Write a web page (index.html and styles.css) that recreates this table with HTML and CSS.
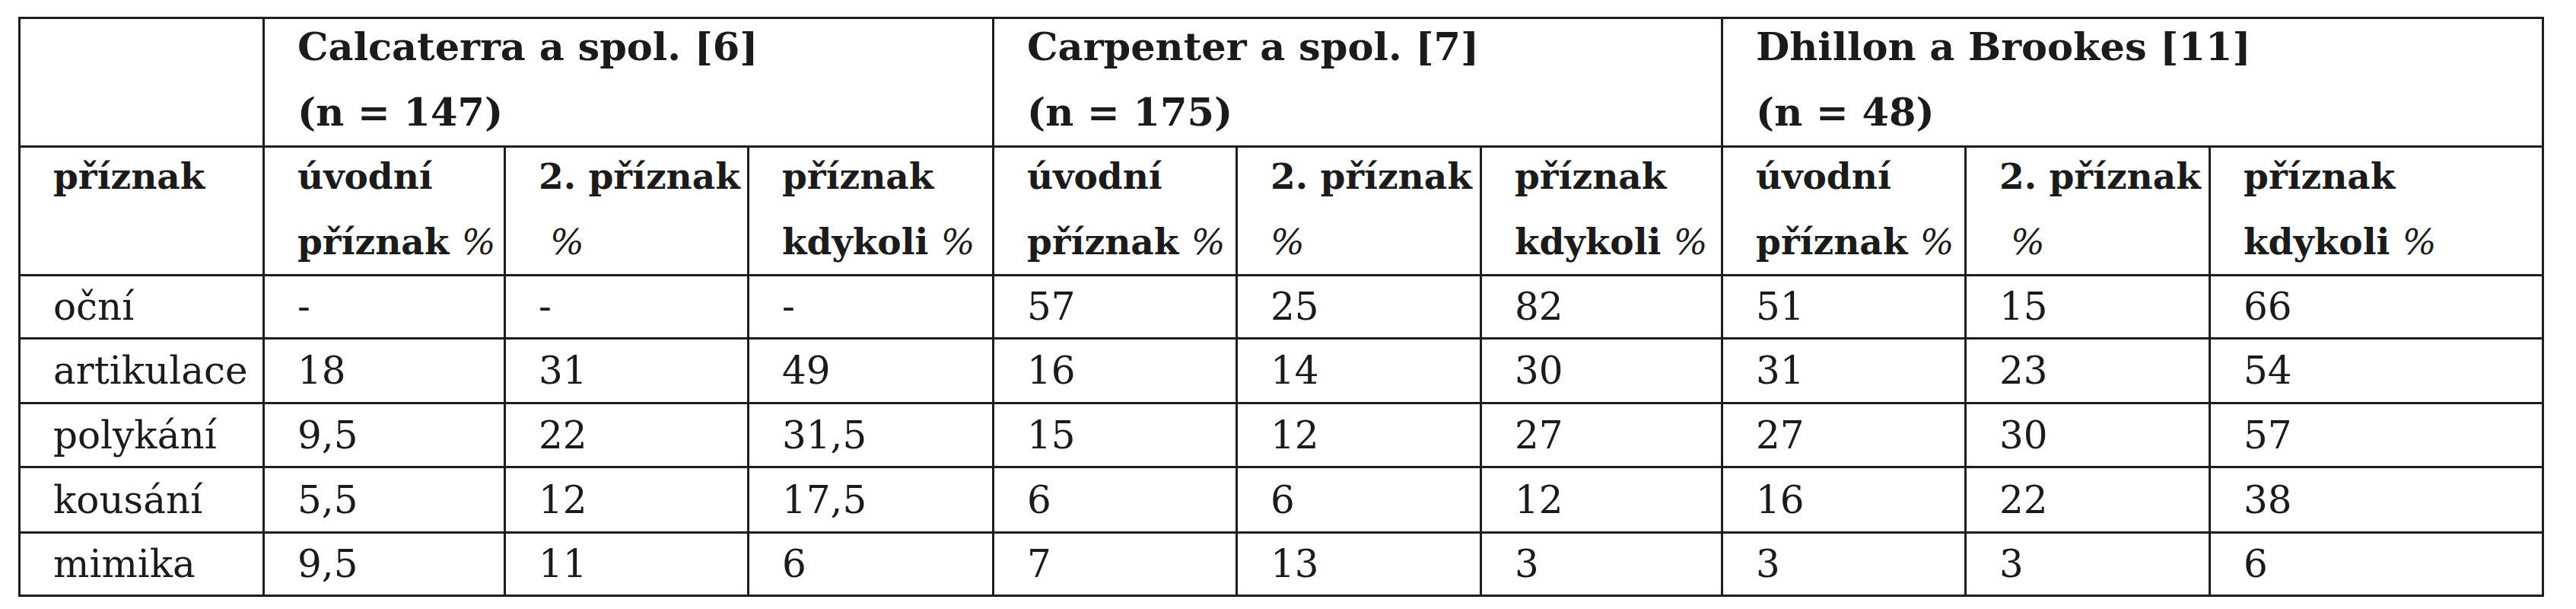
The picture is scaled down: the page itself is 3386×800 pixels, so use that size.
FILE: index.html
```html
<!DOCTYPE html>
<html lang="cs">
<head>
<meta charset="utf-8">
<title>Příznaky</title>
<link rel="stylesheet" href="styles.css">
</head>
<body>
<table class="grid">
  <colgroup>
    <col class="c0"><col class="c1"><col class="c2"><col class="c3"><col class="c4">
    <col class="c5"><col class="c6"><col class="c7"><col class="c8"><col class="c9">
  </colgroup>
  <tr class="h1">
    <td></td>
    <th colspan="3"><div class="hd">Calcaterra a spol. [6]<br>(n = 147)</div></th>
    <th colspan="3"><div class="hd">Carpenter a spol. [7]<br>(n = 175)</div></th>
    <th colspan="3"><div class="hd">Dhillon a Brookes [11]<br>(n = 48)</div></th>
  </tr>
  <tr class="h2">
    <th><div class="hd">příznak</div></th>
    <th><div class="hd">úvodní<br>příznak <span class="pc">%</span></div></th>
    <th><div class="hd">2. příznak<br><span class="pc">&nbsp;%</span></div></th>
    <th><div class="hd">příznak<br>kdykoli <span class="pc">%</span></div></th>
    <th><div class="hd">úvodní<br>příznak <span class="pc">%</span></div></th>
    <th><div class="hd">2. příznak<br><span class="pc">%</span></div></th>
    <th><div class="hd">příznak<br>kdykoli <span class="pc">%</span></div></th>
    <th><div class="hd">úvodní<br>příznak <span class="pc">%</span></div></th>
    <th><div class="hd">2. příznak<br><span class="pc">&nbsp;%</span></div></th>
    <th><div class="hd">příznak<br>kdykoli <span class="pc">%</span></div></th>
  </tr>
  <tr class="r1">
    <td>oční</td><td>-</td><td>-</td><td>-</td><td>57</td><td>25</td><td>82</td><td>51</td><td>15</td><td>66</td>
  </tr>
  <tr class="r2">
    <td>artikulace</td><td>18</td><td>31</td><td>49</td><td>16</td><td>14</td><td>30</td><td>31</td><td>23</td><td>54</td>
  </tr>
  <tr class="r3">
    <td>polykání</td><td>9,5</td><td>22</td><td>31,5</td><td>15</td><td>12</td><td>27</td><td>27</td><td>30</td><td>57</td>
  </tr>
  <tr class="r4">
    <td>kousání</td><td>5,5</td><td>12</td><td>17,5</td><td>6</td><td>6</td><td>12</td><td>16</td><td>22</td><td>38</td>
  </tr>
  <tr class="r5">
    <td>mimika</td><td>9,5</td><td>11</td><td>6</td><td>7</td><td>13</td><td>3</td><td>3</td><td>3</td><td>6</td>
  </tr>
</table>
</body>
</html>
```
FILE: styles.css
```css
html, body {
  margin: 0;
  padding: 0;
  background: #ffffff;
}

body {
  font-family: "DejaVu Serif", "Liberation Serif", serif;
  color: #1b1b1b;
}

.grid {
  margin: 22px 0 0 24px;
  border-collapse: collapse;
  table-layout: fixed;
  width: 3320px;
}

.c0 { width: 321px; }
.c1 { width: 317px; }
.c2 { width: 320px; }
.c3 { width: 322px; }
.c4 { width: 320px; }
.c5 { width: 321px; }
.c6 { width: 317px; }
.c7 { width: 320px; }
.c8 { width: 321px; }
.c9 { width: 438px; }

.grid td,
.grid th {
  border: 3px solid #1e1e1e;
  padding: 0 2px 0 43px;
  text-align: left;
  white-space: nowrap;
  overflow: hidden;
}

.grid th {
  vertical-align: top;
  font-size: 47px;
  font-weight: bold;
}

.h1 th {
  font-size: 51px;
}

.hd {
  line-height: 86px;
  margin: -5px 0 -5px;
}

.h1 .hd {
  margin: -7px 0 -7px;
}

.pc {
  font-weight: normal;
  font-style: italic;
}

.grid td {
  vertical-align: middle;
  font-size: 50px;
  font-weight: normal;
  line-height: 60px;
}

.h1, .h2 { height: 169px; }
.r1 { height: 83px; }
.r2 { height: 85px; }
.r3 { height: 84px; }
.r4 { height: 86px; }
.r5 { height: 83px; }
```
